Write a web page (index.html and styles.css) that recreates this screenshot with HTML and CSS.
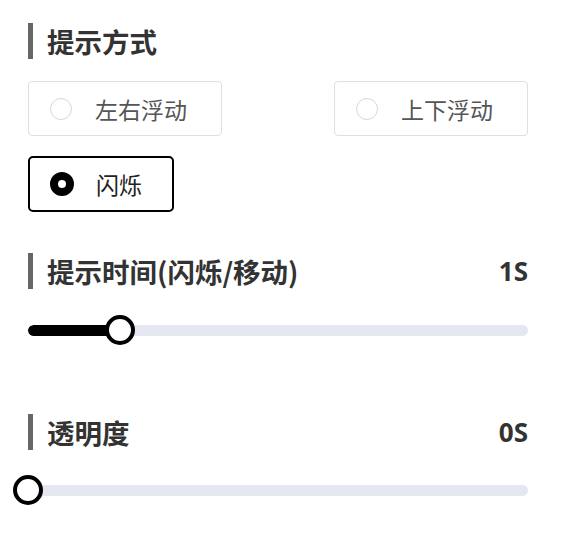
FILE: index.html
```html
<!DOCTYPE html>
<html lang="zh">
<head>
<meta charset="utf-8">
<link rel="stylesheet" href="styles.css">
</head>
<body>
<div class="panel">
  <div class="title t1"><span>提示方式</span></div>
  <div class="options">
    <div class="row">
      <div class="opt wide"><span class="radio"></span><span class="label">左右浮动</span></div>
      <div class="opt wide"><span class="radio"></span><span class="label">上下浮动</span></div>
    </div>
    <div class="row">
      <div class="opt narrow active"><span class="radio"></span><span class="label">闪烁</span></div>
    </div>
  </div>
  <div class="title t2"><span>提示时间(闪烁/移动)</span><span class="val">1S</span></div>
  <div class="slider s1">
    <div class="track"><div class="fill" style="width:92px"></div></div>
    <div class="thumb" style="left:92px"></div>
  </div>
  <div class="title t3"><span>透明度</span><span class="val">0S</span></div>
  <div class="slider s2">
    <div class="track"><div class="fill" style="width:0px"></div></div>
    <div class="thumb" style="left:0px"></div>
  </div>
</div>
</body>
</html>
```
FILE: styles.css
```css
html, body {
  margin: 0;
  padding: 0;
  background: #ffffff;
}
body {
  font-family: "Noto Sans CJK SC", "Noto Sans", sans-serif;
  color: #333;
}
.panel {
  width: 500px;
  margin-left: 28px;
  padding-top: 23px;
  display: flex;
  flex-direction: column;
}
.title {
  display: flex;
  justify-content: space-between;
  align-items: center;
  height: 36px;
  border-left: 5px solid #666;
  padding-left: 14px;
  font-size: 27.5px;
  font-weight: 600;
  color: #333;
  line-height: 36px;
}
.title .val {
  font-family: "Open Sans", "Noto Sans", sans-serif;
  font-size: 26px;
  font-weight: 700;
}
.options {
  margin-top: 22px;
  display: flex;
  flex-direction: column;
  gap: 20px;
}
.row {
  display: flex;
  justify-content: space-between;
}
.opt {
  box-sizing: border-box;
  display: flex;
  align-items: center;
  border: 1.5px solid #dcdfe6;
  border-radius: 4px;
  padding-left: 21px;
  height: 55px;
  color: #555;
  font-size: 23px;
}
.opt.wide { width: 194px; }
.opt.narrow { width: 146px; height: 56px; }
.radio {
  box-sizing: border-box;
  width: 22px;
  height: 22px;
  border-radius: 50%;
  border: 1.5px solid #d4d8e0;
  background: #fff;
  flex: none;
}
.label {
  margin-left: 23px;
}
.opt.active {
  border: 2px solid #000;
  border-radius: 5px;
  color: #222;
  padding-left: 20px;
}
.opt.active .radio {
  width: 24px;
  height: 24px;
  border: 8.5px solid #000;
}
.opt.active .label { margin-left: 22px; }
.t2 { margin-top: 41px; }
.t3 { margin-top: 69px; }
.slider {
  position: relative;
  height: 30px;
  margin-top: 26px;
  display: flex;
  align-items: center;
}
.s2 { margin-top: 25px; }
.track {
  width: 100%;
  height: 11px;
  border-radius: 6px;
  background: #e4e7ef;
  overflow: hidden;
}
.fill {
  height: 100%;
  background: #000;
  border-radius: 6px;
}
.thumb {
  position: absolute;
  top: 0;
  box-sizing: border-box;
  width: 30px;
  height: 30px;
  margin-left: -15px;
  border-radius: 50%;
  border: 4px solid #000;
  background: #fff;
}
```
